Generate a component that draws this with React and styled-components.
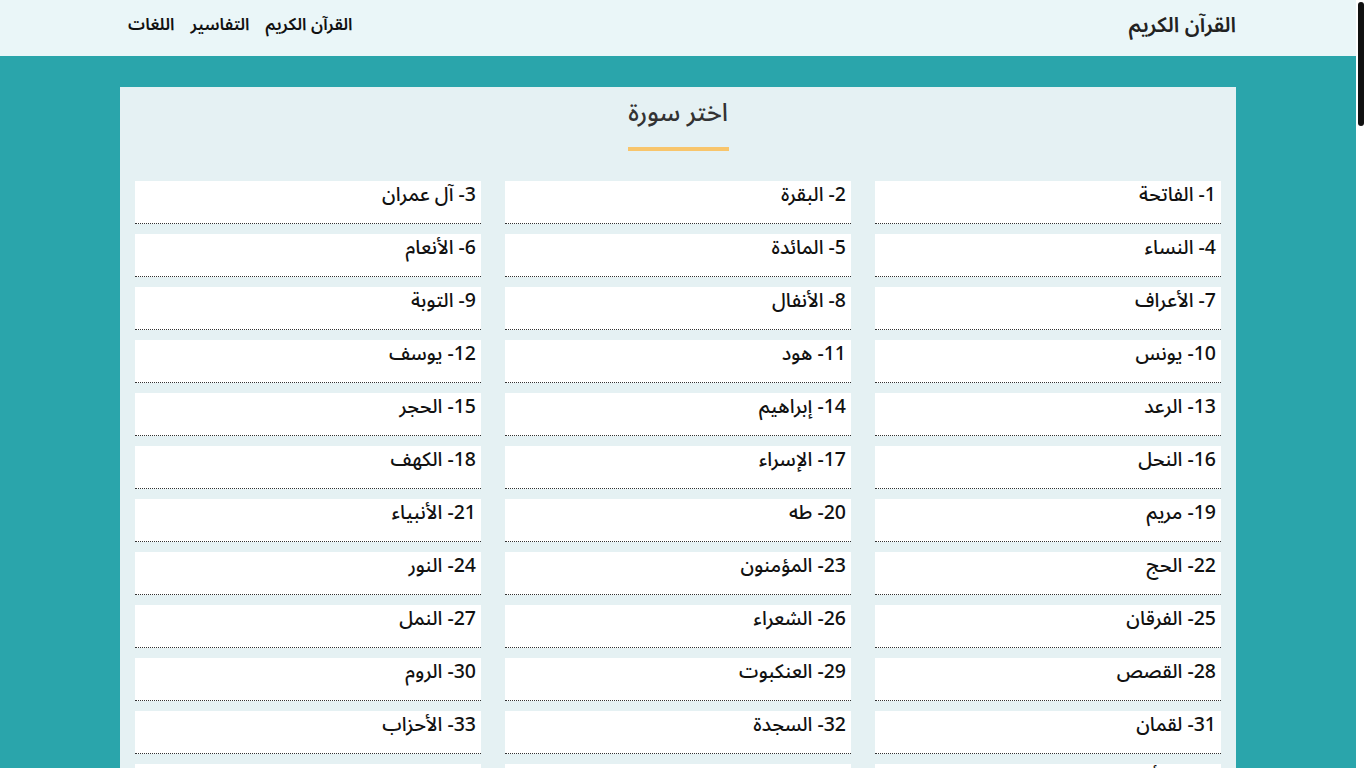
import React from 'react';
import styled, { createGlobalStyle } from 'styled-components';

const surahs = ['الفاتحة','البقرة','آل عمران','النساء','المائدة','الأنعام','الأعراف','الأنفال','التوبة','يونس','هود','يوسف','الرعد','إبراهيم','الحجر','النحل','الإسراء','الكهف','مريم','طه','الأنبياء','الحج','المؤمنون','النور','الفرقان','الشعراء','النمل','القصص','العنكبوت','الروم','لقمان','السجدة','الأحزاب','سبأ','فاطر','يس','الصافات','ص','الزمر','غافر','فصلت','الشورى','الزخرف','الدخان','الجاثية','الأحقاف','محمد','الفتح','الحجرات','ق','الذاريات','الطور','النجم','القمر','الرحمن','الواقعة','الحديد','المجادلة','الحشر','الممتحنة','الصف','الجمعة','المنافقون','التغابن','الطلاق','التحريم','الملك','القلم','الحاقة','المعارج','نوح','الجن','المزمل','المدثر','القيامة','الإنسان','المرسلات','النبأ','النازعات','عبس','التكوير','الانفطار','المطففين','الانشقاق','البروج','الطارق','الأعلى','الغاشية','الفجر','البلد','الشمس','الليل','الضحى','الشرح','التين','العلق','القدر','البينة','الزلزلة','العاديات','القارعة','التكاثر','العصر','الهمزة','الفيل','قريش','الماعون','الكوثر','الكافرون','النصر','المسد','الإخلاص','الفلق','الناس'];

const GlobalStyle = createGlobalStyle`
  html, body { margin: 0; padding: 0; }
  body {
    background: #2aa5ab;
    font-family: "Noto Sans Arabic", "Noto Sans", "DejaVu Sans", sans-serif;
    color: #111;
  }
`;

function App() {
  return (
    <>
      <GlobalStyle />
      <Page>
        <Header>
          <HeaderInner>
            <Brand>القرآن الكريم</Brand>
            <Nav>
              <NavLink>القرآن الكريم</NavLink>
              <NavLink>التفاسير</NavLink>
              <NavLink>اللغات</NavLink>
            </Nav>
          </HeaderInner>
        </Header>
        <Panel>
          <Title>اختر سورة</Title>
          <Underline />
          <Grid>
            {surahs.map((s, i) => (
              <Item key={i}>{`${i + 1}- ${s}`}</Item>
            ))}
          </Grid>
        </Panel>
      </Page>
      <ScrollTrack>
        <ScrollThumb />
      </ScrollTrack>
    </>
  );
}

const Page = styled.div`
  margin-right: 10px;
`;

const Header = styled.header`
  background: #eaf6f8;
  height: 56px;
  direction: rtl;
`;

const HeaderInner = styled.div`
  width: 1116px;
  height: 100%;
  margin: 0 auto;
  padding-left: 8px;
  box-sizing: border-box;
  display: flex;
  align-items: center;
  justify-content: space-between;
`;

const Brand = styled.div`
  font-size: 21px;
  font-weight: 600;
  color: #222;
  margin-top: -6px;
`;

const Nav = styled.nav`
  display: flex;
  gap: 16px;
  margin-top: -6px;
`;

const NavLink = styled.a`
  font-size: 17px;
  font-weight: 600;
  color: #111;
  cursor: pointer;
`;

const Panel = styled.main`
  width: 1116px;
  margin: 31px auto 0;
  background: #e5f1f3;
  padding: 8px 15px 20px;
  box-sizing: border-box;
  direction: rtl;
  display: flex;
  flex-direction: column;
  align-items: center;
`;

const Title = styled.h2`
  margin: 0;
  font-size: 25px;
  font-weight: 500;
  color: #333;
  line-height: 36px;
`;

const Underline = styled.div`
  width: 101px;
  height: 4px;
  background: #f8c56b;
  margin: 16px 0 30px;
`;

const Grid = styled.div`
  width: 100%;
  display: grid;
  grid-template-columns: repeat(3, 1fr);
  column-gap: 24px;
  row-gap: 10px;
`;

const Item = styled.div`
  background: #fff;
  height: 43px;
  box-sizing: border-box;
  border-bottom: 1px dotted #333;
  padding: 0 5px;
  font-size: 19.5px;
  font-weight: 500;
  line-height: 27px;
  cursor: pointer;
`;

const ScrollTrack = styled.div`
  position: fixed;
  top: 0;
  right: 0;
  width: 10px;
  height: 100vh;
  background: #fff;
`;

const ScrollThumb = styled.div`
  margin: 2px 2px 0 2px;
  height: 124px;
  background: #111;
  border-radius: 3px;
`;

export default App;
